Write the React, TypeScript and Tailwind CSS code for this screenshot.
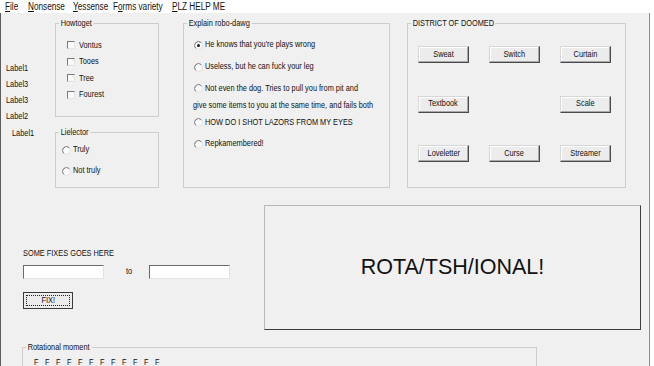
import React from "react";

// the form font is narrower than Arial at the same height
function N({ children, center }: { children: React.ReactNode; center?: boolean }) {
	return (
		<span
			className={`inline-block whitespace-nowrap scale-x-[0.82] ${center ? "origin-center" : "origin-left"}`}
		>
			{children}
		</span>
	);
}

function CheckBox({ label }: { label: string }) {
	return (
		<div className="flex h-[16.5px] items-center pl-[11px]">
			<span className="h-[8px] w-[8px] shrink-0 border border-t-[#7a7a7a] border-l-[#7a7a7a] border-r-[#e3e3e3] border-b-[#e3e3e3] bg-[#fbfbfb]" />
			<span className="ml-[4px]">
				<N>{label}</N>
			</span>
		</div>
	);
}

function RadioDot({ checked }: { checked?: boolean }) {
	return (
		<svg width="9" height="9" viewBox="0 0 9 9" className="shrink-0">
			<circle cx="4.5" cy="4.5" r="3.9" fill="#fbfbfb" stroke="#dedede" strokeWidth="0.9" />
			<path d="M1.7 7.3 A3.9 3.9 0 0 1 7.3 1.7" fill="none" stroke="#6f6f6f" strokeWidth="0.9" />
			{checked && <circle cx="4.5" cy="4.5" r="1.5" fill="#1a1a1a" />}
		</svg>
	);
}

function Radio({ label, checked, h }: { label: string; checked?: boolean; h: string }) {
	return (
		<div className={`flex items-center ${h}`}>
			<RadioDot checked={checked} />
			<span className="ml-[2px]">
				<N>{label}</N>
			</span>
		</div>
	);
}

function Btn({ label }: { label: string }) {
	return (
		<div className="flex h-[17px] w-[51px] items-center justify-center border border-t-[#d6d6d6] border-l-[#d6d6d6] border-r-[#4a4a4a] border-b-[#4a4a4a] bg-[#ececec] shadow-[inset_-1px_-1px_0_#a9a9a9,inset_1px_1px_0_#ffffff]">
			<N center>{label}</N>
		</div>
	);
}

function Group({
	title,
	className,
	children,
}: {
	title: string;
	className: string;
	children?: React.ReactNode;
}) {
	return (
		<div className={`relative border border-[#cdcdcd] ${className}`}>
			<span className="absolute -top-[6px] left-[3px] inline-block origin-left scale-x-[0.82] whitespace-nowrap bg-[#f0f0f0] px-[2px] leading-[11px]">
				{title}
			</span>
			{children}
		</div>
	);
}

const menu = [
	{ key: "F", rest: "ile", w: "w-[23px]" },
	{ key: "N", rest: "onsense", w: "w-[45px]" },
	{ key: "Y", rest: "essense", w: "w-[40px]" },
	{ pre: "F", key: "o", rest: "rms variety", w: "w-[59px]" },
	{ key: "P", rest: "LZ HELP ME", w: "w-[70px]" },
];

export default function App() {
	return (
		<div className="h-[366px] w-[654px] overflow-hidden bg-white font-['Liberation_Sans',Arial,sans-serif] text-[9px] text-[#111]">
			{/* menu strip */}
			<div className="flex h-[13px] items-center pl-[5px] pt-[1px] text-[10px] leading-[12px]">
				{menu.map((m) => (
					<span key={m.rest} className={`${m.w} whitespace-nowrap`}>
						<N>
							{m.pre}
							<span className="underline underline-offset-[1px]">{m.key}</span>
							{m.rest}
						</N>
					</span>
				))}
			</div>

			{/* form body */}
			<div className="flex h-[353px] w-[650px] flex-col border-l border-r border-l-[#5c5c5c] border-r-[#8e8e8e] bg-[#f0f0f0]">
				{/* top row */}
				<div className="flex items-start">
					<div className="flex w-[54px] flex-col pt-[46.5px] leading-[16.25px]">
						<span className="pl-[5px]"><N>Label1</N></span>
						<span className="pl-[5px]"><N>Label3</N></span>
						<span className="pl-[5px]"><N>Label3</N></span>
						<span className="pl-[5px]"><N>Label2</N></span>
						<span className="pl-[11px]"><N>Label1</N></span>
					</div>

					<div className="mt-[10px] flex w-[104px] flex-col">
						<Group title="Howtoget" className="h-[94px] pt-[13px]">
							<CheckBox label="Vontus" />
							<CheckBox label="Tooes" />
							<CheckBox label="Tree" />
							<CheckBox label="Fourest" />
						</Group>
						<Group title="Lielector" className="mt-[15px] h-[56px] pl-[6px] pt-[6.5px]">
							<Radio label="Truly" h="h-[21px]" />
							<Radio label="Not truly" h="h-[21px]" />
						</Group>
					</div>

					<Group title="Explain robo-dawg" className="ml-[24px] mt-[10px] h-[165px] w-[207px] pl-[10px] pt-[10px]">
						<Radio label="He knows that you're plays wrong" checked h="h-[22px]" />
						<Radio label="Useless, but he can fuck your leg" h="h-[22px]" />
						<Radio label="Not even the dog. Tries to pull you from pit and" h="h-[21px]" />
						<div className="-ml-[1px] flex h-[13px] items-center">
							<N>give some items to you at the same time, and fails both</N>
						</div>
						<Radio label="HOW DO I SHOT LAZORS FROM MY EYES" h="h-[21px]" />
						<Radio label="Repkamembered!" h="h-[22px]" />
					</Group>

					<Group title="DISTRICT OF DOOMED" className="ml-[17px] mt-[10px] h-[165px] w-[219px] pl-[10px] pt-[22px]">
						<div className="grid grid-cols-[51px_51px_51px] gap-x-[20px] gap-y-[32.5px]">
							<Btn label="Sweat" />
							<Btn label="Switch" />
							<Btn label="Curtain" />
							<Btn label="Textbook" />
							<div />
							<Btn label="Scale" />
							<Btn label="Loveletter" />
							<Btn label="Curse" />
							<Btn label="Streamer" />
						</div>
					</Group>
				</div>

				{/* middle row */}
				<div className="flex items-start">
					<div className="flex w-[263px] flex-col pl-[22px] pt-[59px]">
						<div className="leading-[12px]">
							<N>SOME FIXES GOES HERE</N>
						</div>
						<div className="mt-[6px] flex items-center">
							<div className="h-[14px] w-[81px] border border-t-[#6a6a6a] border-l-[#6a6a6a] border-r-[#e3e3e3] border-b-[#e3e3e3] bg-white" />
							<span className="ml-[22px] w-[23px]">
								<N>to</N>
							</span>
							<div className="h-[14px] w-[81px] border border-t-[#6a6a6a] border-l-[#6a6a6a] border-r-[#e3e3e3] border-b-[#e3e3e3] bg-white" />
						</div>
						<div className="mt-[13px] flex h-[17px] w-[50px] items-center justify-center border border-[#3a3a3a] bg-[#ececec] p-[2px]">
							<div className="flex h-full w-full items-center justify-center border border-dotted border-[#222]">
								<N center>FIX!</N>
							</div>
						</div>
					</div>
					<div className="mt-[17px] flex h-[125px] w-[377px] items-center justify-center border border-t-[#b9b9b9] border-l-[#b9b9b9] border-r-[#3d3d3d] border-b-[#3d3d3d] text-[21.5px]">
						ROTA/TSH/IONAL!
					</div>
				</div>

				{/* bottom group */}
				<Group title="Rotational moment" className="ml-[21px] mt-[17px] h-[40px] w-[515px] shrink-0 pl-[11px] pt-[9px]">
					<div className="flex leading-[10px]">
						{Array.from({ length: 12 }).map((_, i) => (
							<span key={i} className="w-[11px]">
								<N>F</N>
							</span>
						))}
					</div>
				</Group>
			</div>
		</div>
	);
}
